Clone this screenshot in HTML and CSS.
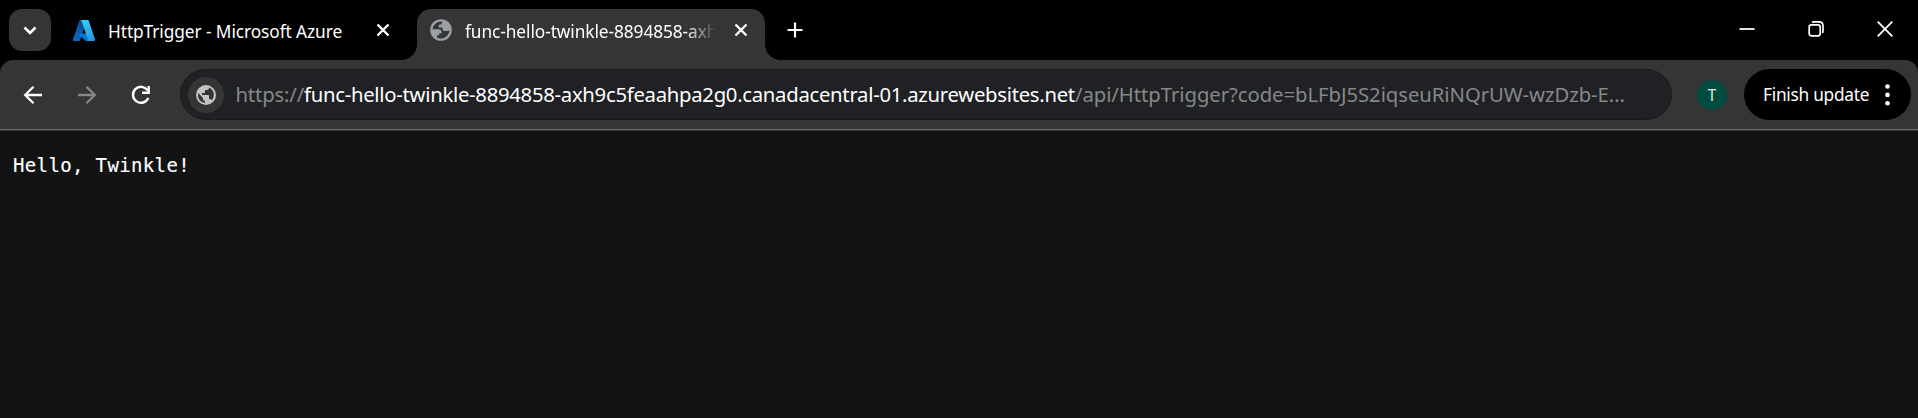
FILE: index.html
```html
<!DOCTYPE html>
<html lang="en">
<head>
<meta charset="utf-8">
<title>func-hello-twinkle</title>
<link rel="stylesheet" href="styles.css">
</head>
<body>
<header class="tabstrip">
  <button class="tab-search" aria-label="Search tabs"><svg width="42" height="42" viewBox="0 0 42 42"><path d="M15.5 18.5l5.5 5.5 5.5-5.5" fill="none" stroke="#fff" stroke-width="2.6"/></svg></button>
  <div class="tab">
    <svg class="azure" width="22" height="21" viewBox="0 0 22 21">
      <defs>
        <linearGradient id="az1" x1=".6" y1="0" x2=".3" y2="1"><stop offset="0" stop-color="#114a8b"/><stop offset="1" stop-color="#0a69c3"/></linearGradient>
        <linearGradient id="az2" x1=".4" y1="0" x2=".7" y2="1"><stop offset="0" stop-color="#3ccbf4"/><stop offset="1" stop-color="#2892df"/></linearGradient>
      </defs>
      <path d="M7.3 0h6.5L7.1 20.2c-.2.5-.6.8-1.1.8H1.1C.3 21-.2 20.200 0 19.500L6.200.8C6.400.3 6.800 0 7.300 0z" fill="url(#az1)"/>
      <path d="M16.500 13.600H6.200c-.5 0-.7.6-.3.900l6.600 6.200c.2.200.5.300.800.300H19z" fill="#0078d4"/>
      <path d="M15.800.800C15.600.300 15.200 0 14.700 0H7.500c.500 0 .900.300 1.100.800l6.200 18.700c.3.700-.2 1.500-1 1.500h7.100c.8 0 1.300-.8 1.100-1.500z" fill="url(#az2)"/>
    </svg>
    <span class="tab-title title-azure">HttpTrigger - Microsoft Azure</span>
    <svg class="close" width="14" height="14" viewBox="0 0 14 14"><path d="M1.500 1.500l11 11M12.500 1.500l-11 11" stroke="#fff" stroke-width="2.400"/></svg>
  </div>
  <div class="tab active">
    <svg class="globe" width="22" height="22" viewBox="0 0 22 22"><circle cx="11" cy="11" r="10.800" fill="#9aa0a6"/><path d="M13 2.600C8 1.700 3.200 5 2.500 10.200h5.800c2.200 0 3.400 1.200 3.400 3.300v.7H9.200v2H7v2.300c4 2.100 9.300.6 11.500-3.800.6-1.200.9-2.400.9-3.700l-1.400.9h-3.200c-1.500 0-2.300-.8-2.300-2.300V8.500H9.800c-.8 0-1.200-.5-1.200-1.300 0-1.200.6-1.700 1.700-1.700h1.300c0-1.400.4-2.300 1.400-2.900z" fill="#353535"/></svg>
    <span class="tab-title title-func">func-hello-twinkle-8894858-axh</span>
    <svg class="close" width="14" height="14" viewBox="0 0 14 14"><path d="M1.500 1.500l11 11M12.500 1.500l-11 11" stroke="#fff" stroke-width="2.400"/></svg>
  </div>
  <svg class="new-tab" width="16" height="16" viewBox="0 0 16 16"><path d="M8 .5v15M.5 8h15" stroke="#fff" stroke-width="2.200"/></svg>
  <div class="window-controls">
    <svg width="16" height="16" viewBox="0 0 16 16"><path d="M.5 8h15" stroke="#fff" stroke-width="1.800"/></svg>
    <svg width="16" height="16" viewBox="0 0 16 16" fill="none" stroke="#fff" stroke-width="1.700"><rect x="1.200" y="3.800" width="11" height="11" rx="2.300"/><path d="M4 1.500q1-.6 2-.6h5q4 0 4 4v5q0 1.200-.7 2"/></svg>
    <svg width="16" height="16" viewBox="0 0 16 16"><path d="M.7.700l14.600 14.600M15.300.700L.7 15.300" stroke="#fff" stroke-width="1.800"/></svg>
  </div>
</header>
<div class="frame">
<nav class="toolbar">
  <svg class="nav" width="20" height="20" viewBox="0 0 20 20" fill="none" stroke="#fff" stroke-width="2.300"><path d="M19 10H2.500M10.500 1.700L2.200 10l8.300 8.300"/></svg>
  <svg class="nav" width="20" height="20" viewBox="0 0 20 20" fill="none" stroke="#868686" stroke-width="2.300"><path d="M1 10h16.500M9.500 1.700l8.300 8.300-8.300 8.300"/></svg>
  <svg class="nav" width="20" height="20" viewBox="0 0 20 20" fill="none" stroke="#fff" stroke-width="2.400"><path d="M16.600 5.300A8 8 0 1 0 17.300 13"/><path d="M17.700 1v6.700H11"/></svg>
  <div class="omnibox">
    <span class="site-info"><svg width="20" height="20" viewBox="0 0 20 20"><circle cx="10" cy="10" r="10" fill="#c4c4c4"/><path d="M2.300 8.100l4.700 4.800v1c0 1.100.9 2 2 2v2C4.600 17.400 2 14 2 10c0-.6.100-1.300.3-1.900zM15.900 15.400c-.3-.8-1-1.400-1.900-1.400h-1v-3c0-.6-.4-1-1-1H6V8h2c.6 0 1-.4 1-1V5h2c1.100 0 2-.9 2-2v-.4c4.900 2 6.500 8.500 2.900 12.800z" fill="#353535"/></svg></span>
    <span class="url"><span class="scheme">https://</span><span class="host">func-hello-twinkle-8894858-axh9c5feaahpa2g0.canadacentral-01.azurewebsites.net</span><span class="path">/api/HttpTrigger?code=bLFbJ5S2iqseuRiNQrUW-wzDzb-E...</span></span>
  </div>
  <span class="avatar">T</span>
  <button class="update"><span>Finish update</span><svg width="5" height="22" viewBox="0 0 5 22" fill="#fff"><circle cx="2.500" cy="2.500" r="2.300"/><circle cx="2.500" cy="10.900" r="2.300"/><circle cx="2.500" cy="19.300" r="2.300"/></svg></button>
</nav>
</div>
<main class="page"><pre class="output">Hello, Twinkle!</pre></main>
</body>
</html>
```
FILE: styles.css
```css
* { box-sizing: border-box; }
body { margin: 0; height: 418px; display: flex; flex-direction: column; overflow: hidden; background: #131313; color: #fff; font-family: "Noto Sans", "Open Sans", sans-serif; }
svg { display: block; flex: none; }
button { border: 0; padding: 0; color: inherit; font: inherit; }
.tabstrip { height: 60px; flex: none; display: flex; align-items: flex-start; background: #000; }
.tab-search { width: 42px; height: 42px; margin: 9px 0 0 9px; border-radius: 13px; background: #353535; flex: none; }
.tab { width: 339px; height: 51px; margin-top: 9px; padding: 0 0 9px 22px; display: flex; align-items: center; flex: none; }
.tab.active { width: 348px; margin-left: 27px; padding-left: 13px; position: relative; background: #353535; border-radius: 14px 14px 0 0; }
.tab.active::before, .tab.active::after { content: ""; position: absolute; bottom: 0; width: 15px; height: 15px; }
.tab.active::before { left: -15px; background: radial-gradient(circle at 0 0, transparent 14.5px, #353535 15px); }
.tab.active::after { right: -15px; background: radial-gradient(circle at 100% 0, transparent 14.5px, #353535 15px); }
.tab-title { height: 30px; line-height: 30px; margin: 3px 0 0 13px; font-size: 17.3px; letter-spacing: -.08px; white-space: nowrap; }
.title-azure { width: 258px; }
.title-func { width: 250px; -webkit-mask-image: linear-gradient(90deg, #000 220px, transparent 251px); mask-image: linear-gradient(90deg, #000 220px, transparent 251px); }
.close { margin-left: 12px; }
.active .close { margin-left: 19px; }
.new-tab { margin: 22px 0 0 22px; }
.window-controls { margin: 21px 25px 0 auto; display: flex; gap: 53px; }
.frame { flex: none; background: #000; }
.toolbar { height: 71px; display: flex; align-items: center; padding: 0 7px 2px 23px; background: #353535; border-radius: 13px 13px 0 0; position: relative; }
.toolbar::after { content: ""; position: absolute; left: 0; right: 0; bottom: 1px; height: 1px; background: #696969; }
.nav { margin-right: 34px; }
.omnibox { width: 1492px; height: 51px; margin-left: -5px; padding-left: 7px; border: 1px solid #191a1c; border-radius: 26px; background: #202124; display: flex; align-items: center; flex: none; }
.site-info { width: 36px; height: 36px; border-radius: 50%; background: #353535; display: grid; place-items: center; flex: none; }
.url { margin: 0 0 2px 11.5px; font-size: 20.3px; line-height: 30px; white-space: nowrap; }
.scheme, .path { color: #868889; }
.scheme { letter-spacing: -.17px; }
.host { color: #fff; letter-spacing: -.28px; }
.path { letter-spacing: -.05px; }
.avatar { width: 30px; height: 30px; margin-left: 25px; border-radius: 50%; background: #004d40; color: #dbe6e4; font-size: 16px; line-height: 30px; text-align: center; flex: none; }
.update { width: 167px; height: 51px; margin-left: auto; padding: 0 21px 0 19px; border-radius: 26px; background: #000; display: flex; align-items: center; justify-content: space-between; font-size: 17.3px; letter-spacing: -.26px; white-space: nowrap; }
.page { flex: 1; padding: 21px 13px; background: #131313; }
.output { margin: 0; font: 19px/26px "DejaVu Sans Mono", monospace; letter-spacing: .36px; -webkit-text-stroke: .15px #fff; }
```
